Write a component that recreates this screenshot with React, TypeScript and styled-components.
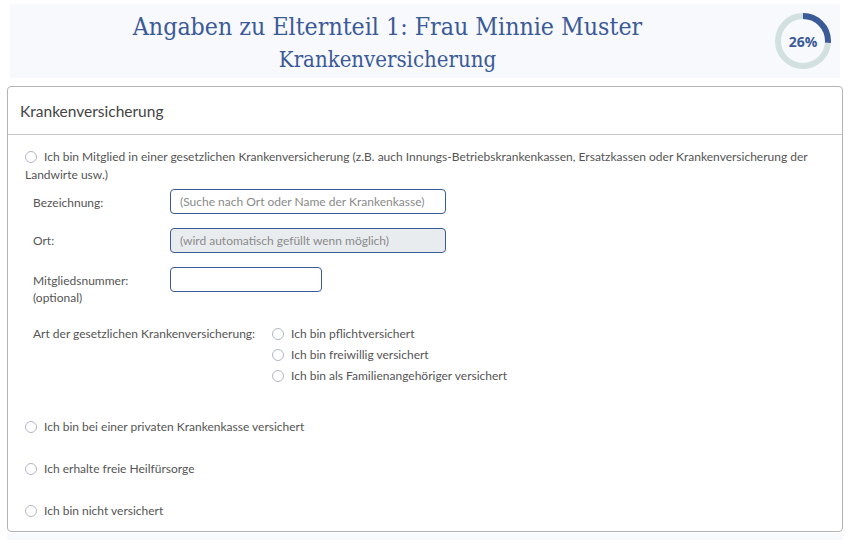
import React from 'react';
import styled, { createGlobalStyle } from 'styled-components';

const GlobalStyle = createGlobalStyle`
  html, body {
    margin: 0;
    padding: 0;
    background: #ffffff;
  }
  body {
    font-family: Lato, "Open Sans", sans-serif;
    font-size: 12px;
    color: #555555;
  }
`

const Page = styled.div`
  width: 855px;
  padding: 4px 12px 0 7px;
  box-sizing: border-box;
`

const Header = styled.div`
  display: flex;
  align-items: center;
  height: 74px;
  margin: 0 3px;
  background: #f7f9fc;
`

const TitleBlock = styled.div`
  flex: 1;
  display: flex;
  flex-direction: column;
  align-items: center;
  padding-top: 3px;
  color: #3b5a98;
  font-family: "DejaVu Serif Condensed", "DejaVu Serif", serif;
`

const Title = styled.h1`
  margin: 0;
  font-size: 24.7px;
  font-weight: normal;
  line-height: 34px;
`

const SubTitle = styled.h2`
  margin: 0;
  font-size: 22px;
  font-weight: normal;
  line-height: 31px;
`

const RingBox = styled.div`
  position: relative;
  width: 56px;
  height: 56px;
  margin: 0 9px 0 10px;
`

const RingLabel = styled.span`
  position: absolute;
  inset: 0;
  display: flex;
  align-items: center;
  justify-content: center;
  font-family: "Open Sans", sans-serif;
  font-weight: bold;
  font-size: 14px;
  color: #3b5a98;
`

const Panel = styled.div`
  margin-top: 8px;
  border: 1px solid #b4b4b4;
  border-radius: 4px;
  height: 446px;
  box-sizing: border-box;
`

const PanelHeader = styled.div`
  height: 47px;
  display: flex;
  align-items: center;
  padding-left: 12px;
  font-size: 15.5px;
  color: #444444;
  border-bottom: 1px solid #c8c8c8;
`

const PanelBody = styled.div`
  padding: 13px 10px 0 17px;
`

const Option = styled.label`
  display: block;
  line-height: 18px;
`

const Radio = styled.span`
  display: inline-block;
  width: 12px;
  height: 12px;
  border: 1px solid #b0b8c4;
  border-radius: 50%;
  background: #fff;
  vertical-align: -2px;
  margin-right: 7px;
  box-sizing: border-box;
`

const Fields = styled.div`
  padding-left: 8px;
  margin-top: 5px;
`

const FieldRow = styled.div<{ gap?: number }>`
  display: flex;
  align-items: flex-start;
  margin-bottom: ${p => p.gap ?? 14}px;
`

const FieldLabel = styled.div<{ top?: number }>`
  width: 137px;
  line-height: 17px;
  padding-top: ${p => p.top ?? 5}px;
`

const Input = styled.div<{ readOnly?: boolean; w: number }>`
  width: ${p => p.w}px;
  height: 25px;
  box-sizing: border-box;
  border: 1px solid #3b5a98;
  border-radius: 4px;
  background: ${p => (p.readOnly ? '#e9ecef' : '#ffffff')};
  color: #8a8a8a;
  padding-left: 9px;
  display: flex;
  align-items: center;
`

const ArtRow = styled.div`
  display: flex;
  margin-top: 17px;
`

const ArtLabel = styled.div`
  width: 239px;
  line-height: 21px;
`

const SubOptions = styled.div`
  display: flex;
  flex-direction: column;
`

const SubOption = styled.label`
  line-height: 21px;
`

const OtherOptions = styled.div`
  margin-top: 32px;
  display: flex;
  flex-direction: column;
  gap: 24px;
`

const Footer = styled.div`
  height: 8px;
  margin-top: 1px;
  background: #f7f9fc;
`

function ProgressRing({ value }: { value: number }) {
  const r = 25;
  const c = 2 * Math.PI * r;
  return (
    <RingBox>
      <svg width="56" height="56" viewBox="0 0 56 56">
        <circle cx="28" cy="28" r={r} fill="none" stroke="#d3e0e0" strokeWidth="6" />
        <circle
          cx="28"
          cy="28"
          r={r}
          fill="none"
          stroke="#3b5a98"
          strokeWidth="6"
          strokeDasharray={`${(c * value) / 100} ${c}`}
          transform="rotate(-90 28 28)"
        />
      </svg>
      <RingLabel>{value}%</RingLabel>
    </RingBox>
  );
}

export default function App() {
  return (
    <Page>
      <GlobalStyle />
      <Header>
        <TitleBlock>
          <Title>Angaben zu Elternteil 1: Frau Minnie Muster</Title>
          <SubTitle>Krankenversicherung</SubTitle>
        </TitleBlock>
        <ProgressRing value={26} />
      </Header>
      <Panel>
        <PanelHeader>Krankenversicherung</PanelHeader>
        <PanelBody>
          <Option>
            <Radio />
            Ich bin Mitglied in einer gesetzlichen Krankenversicherung (z.B. auch Innungs-Betriebskrankenkassen, Ersatzkassen oder Krankenversicherung der Landwirte usw.)
          </Option>
          <Fields>
            <FieldRow>
              <FieldLabel>Bezeichnung:</FieldLabel>
              <Input w={276}>(Suche nach Ort oder Name der Krankenkasse)</Input>
            </FieldRow>
            <FieldRow>
              <FieldLabel top={4}>Ort:</FieldLabel>
              <Input w={276} readOnly>(wird automatisch gefüllt wenn möglich)</Input>
            </FieldRow>
            <FieldRow gap={0}>
              <FieldLabel top={5}>
                Mitgliedsnummer:
                <br />
                (optional)
              </FieldLabel>
              <Input w={152} />
            </FieldRow>
            <ArtRow>
              <ArtLabel>Art der gesetzlichen Krankenversicherung:</ArtLabel>
              <SubOptions>
                <SubOption><Radio />Ich bin pflichtversichert</SubOption>
                <SubOption><Radio />Ich bin freiwillig versichert</SubOption>
                <SubOption><Radio />Ich bin als Familienangehöriger versichert</SubOption>
              </SubOptions>
            </ArtRow>
          </Fields>
          <OtherOptions>
            <Option><Radio />Ich bin bei einer privaten Krankenkasse versichert</Option>
            <Option><Radio />Ich erhalte freie Heilfürsorge</Option>
            <Option><Radio />Ich bin nicht versichert</Option>
          </OtherOptions>
        </PanelBody>
      </Panel>
      <Footer />
    </Page>
  );
}
